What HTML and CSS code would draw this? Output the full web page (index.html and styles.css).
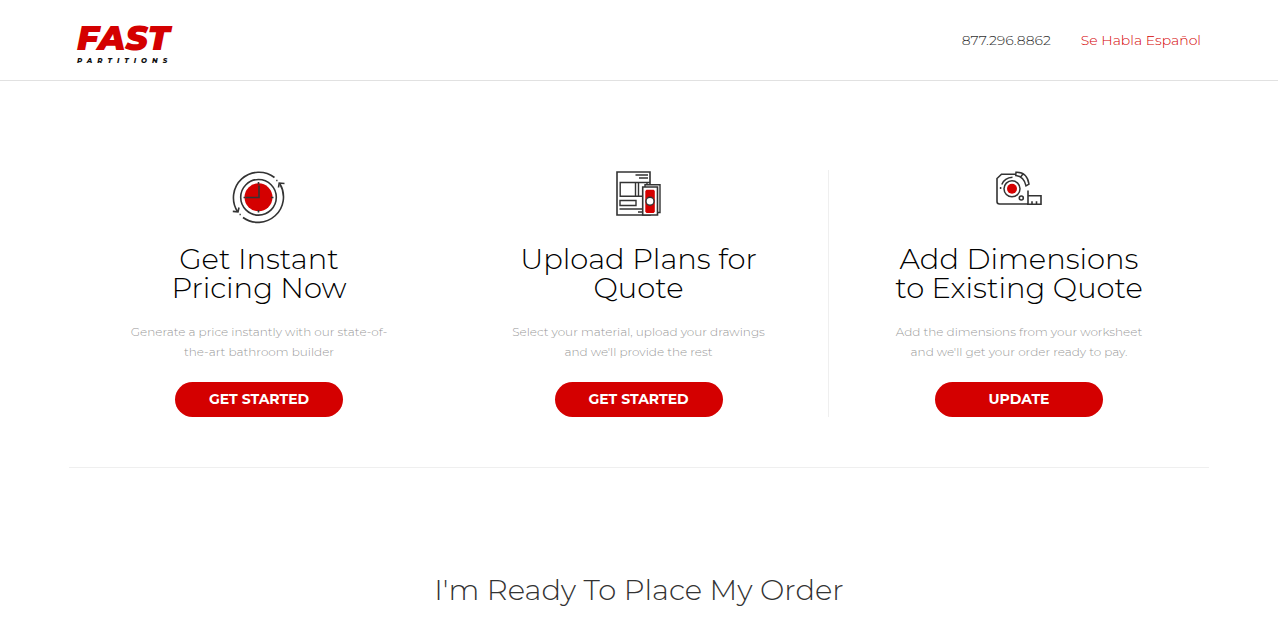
FILE: index.html
```html
<!DOCTYPE html>
<html lang="en">
<head>
<meta charset="utf-8">
<meta name="viewport" content="width=device-width, initial-scale=1">
<title>Fast Partitions</title>
<link rel="stylesheet" href="styles.css">
</head>
<body>
<header class="header">
  <div class="header-inner">
    <a class="logo" href="#"><span class="logo-name">FAST</span><span class="logo-sub">PARTITIONS</span></a>
    <nav class="header-nav">
      <a class="phone" href="tel:8772968862">877.296.8862</a>
      <a class="language" href="#">Se Habla Español</a>
    </nav>
  </div>
</header>
<main class="container">
  <section class="options">
    <article class="option">
      <div class="option-icon">
        <svg width="54" height="54" viewBox="0 0 54 54" fill="none" stroke="#333" stroke-width="1.6" aria-hidden="true">
          <circle cx="26.5" cy="27.3" r="14" fill="#d40000" stroke="none"/>
          <circle cx="26.5" cy="27.3" r="17.8"/>
          <path d="M42.5 7.5A25.5 25.5 0 0 0 5.5 41.5"/>
          <path d="M48 14A25.5 25.5 0 0 1 11 47.5"/>
          <path d="M46.5 17.5L47.2 13L52.5 13.5M0.8 41.4L6 41.8L7 37.5"/>
          <path d="M44.2 10.5h1.3M7.5 44.5h1.3" stroke-width="1.3"/>
          <path d="M27 15.5V27.5H14"/>
          <path d="M26.5 12v2.5M26.5 40v2.5M11.5 27.5h2M39 27.5h2.5"/>
        </svg>
      </div>
      <h2 class="option-title">Get Instant<br>Pricing Now</h2>
      <p class="option-text">Generate a price instantly with our state-of-<br>the-art bathroom builder</p>
      <button class="button" type="button">GET STARTED</button>
    </article>
    <article class="option option-divided">
      <div class="option-icon">
        <svg width="46" height="46" viewBox="0 0 46 46" fill="none" stroke="#333" stroke-width="1.4" aria-hidden="true">
          <path d="M1 2H34V45H1Z" stroke-width="1.6"/>
          <path d="M19.5 5H32M23 8H32"/>
          <path d="M3.5 12.5H34M3.5 26.3H27M4.2 12.5V26.3M19.5 12.5V26.3M22.5 12.5V26.3M31 12.5V16"/>
          <path d="M4 30.5H20V35.5H4ZM3.5 39H26M22 42H26"/>
          <path d="M29 14.7H44V42.5H29Z" fill="#fff"/>
          <path d="M26.7 17H41.5V45H26.7Z" fill="#fff" stroke-width="1.6"/>
          <path d="M30.5 19.7H37.7L38.8 21V41.7L37.7 43H30.5L29.3 41.7V21Z" fill="#d40000" stroke="none"/>
          <circle cx="34" cy="31.3" r="4" fill="#fff"/>
        </svg>
      </div>
      <h2 class="option-title">Upload Plans for<br>Quote</h2>
      <p class="option-text">Select your material, upload your drawings<br>and we'll provide the rest</p>
      <button class="button" type="button">GET STARTED</button>
    </article>
    <article class="option">
      <div class="option-icon">
        <svg width="46" height="46" viewBox="0 0 46 46" fill="none" stroke="#333" stroke-width="1.6" aria-hidden="true">
          <path d="M20 4.2H5.5L1 8.5V31.5Q1 34 3.5 34H32V20.5"/>
          <path d="M20 2.3Q31 1.7 33 14.2L30 15.8Q28 6.5 19.8 5.5ZM26.5 4.5L24.5 7.2" stroke-width="1.5"/>
          <circle cx="16" cy="18.8" r="8" stroke-width="1.5"/>
          <circle cx="16" cy="18.8" r="5" fill="#d40000" stroke="none"/>
          <path d="M5.8 14.5Q8.5 7.8 16.5 7.3M4.6 17v2" stroke-width="1.5"/>
          <circle cx="25.3" cy="28" r="2"/>
          <path d="M32 25.7H45V34.3H31M36 34V31.3M40.5 34V31.3"/>
        </svg>
      </div>
      <h2 class="option-title">Add Dimensions<br>to Existing Quote</h2>
      <p class="option-text">Add the dimensions from your worksheet<br>and we'll get your order ready to pay.</p>
      <button class="button" type="button">UPDATE</button>
    </article>
  </section>
  <h2 class="order-title">I'm Ready To Place My Order</h2>
</main>
</body>
</html>
```
FILE: styles.css
```css
* { box-sizing: border-box; }
body {
  margin: 0;
  background: #fff;
  color: #333;
  font-family: Montserrat, Inter, "Open Sans", sans-serif;
  font-weight: 300;
}
a { text-decoration: none; }
.header { border-bottom: 1px solid #e1e1e1; }
.header-inner {
  display: flex;
  justify-content: space-between;
  align-items: center;
  height: 80px;
  padding: 0 77px;
}
.logo { display: flex; flex-direction: column; gap: 4px; padding-top: 10px; }
.logo-name {
  color: #d40000;
  font-size: 34px;
  font-style: italic;
  font-weight: 900;
  line-height: 28px;
}
.logo-sub {
  color: #111;
  font-size: 7px;
  font-style: italic;
  font-weight: 800;
  letter-spacing: 5px;
  line-height: 10px;
}
.header-nav { display: flex; gap: 30px; font-size: 14px; line-height: 20px; }
.phone { color: #333; }
.language { color: #d40000; }
.container { max-width: 1140px; margin: 0 auto; }
.options {
  display: grid;
  grid-template-columns: repeat(3, 1fr);
  padding: 89px 0 50px;
  border-bottom: 1px solid #efefef;
}
.option { text-align: center; }
.option-divided { border-right: 1px solid #efefef; }
.option-icon { height: 74px; }
.option-icon svg { display: block; margin: 0 auto; }
.option-title {
  margin: 0 0 20px;
  color: #000;
  font-size: 29px;
  font-weight: 300;
  line-height: 29px;
}
.option-text {
  margin: 0 0 20px;
  color: #999;
  font-size: 12px;
  line-height: 20px;
}
.button {
  width: 168px;
  height: 35px;
  padding: 0 0 2px;
  border: 0;
  border-radius: 18px;
  background: #d40000;
  color: #fff;
  font-family: inherit;
  font-size: 14px;
  font-weight: 700;
}
.order-title {
  margin: 104px 0 0;
  font-size: 29px;
  font-weight: 300;
  line-height: 36px;
  text-align: center;
}
```
